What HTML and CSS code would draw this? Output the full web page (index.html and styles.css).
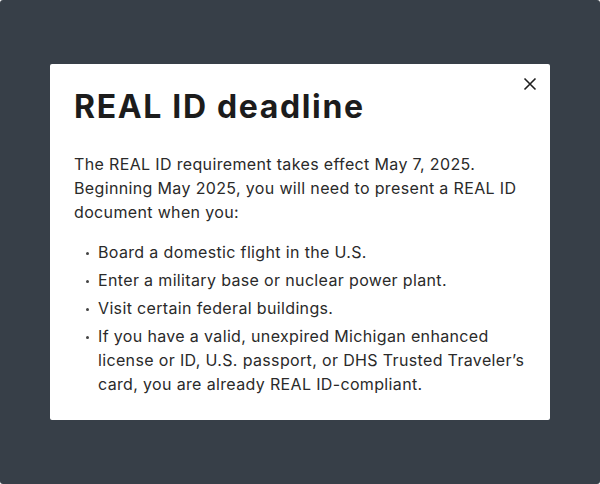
FILE: index.html
```html
<!DOCTYPE html>
<html>
<head>
<meta charset="utf-8">
<link rel="stylesheet" href="styles.css">
</head>
<body>
<div class="backdrop">
  <div class="modal">
    <button class="close" aria-label="Close">
      <svg width="14" height="14" viewBox="0 0 14 14"><path d="M1.5 1.5 L12.5 12.5 M12.5 1.5 L1.5 12.5" stroke="#1f1f1f" stroke-width="1.6" fill="none"/></svg>
    </button>
    <h1 class="title">REAL ID deadline</h1>
    <p class="intro">The REAL ID requirement takes effect May 7, 2025. Beginning May 2025, you will need to present a REAL ID document when you:</p>
    <ul class="list">
      <li>Board a domestic flight in the U.S.</li>
      <li>Enter a military base or nuclear power plant.</li>
      <li>Visit certain federal buildings.</li>
      <li>If you have a valid, unexpired Michigan enhanced license or ID, U.S. passport, or DHS Trusted Traveler’s card, you are already REAL ID-compliant.</li>
    </ul>
  </div>
</div>
</body>
</html>
```

FILE: styles.css
```css
html, body {
  margin: 0;
  padding: 0;
  background: #ffffff;
}
.backdrop {
  width: 600px;
  height: 484px;
  background: #373f48;
  border-radius: 3px;
  display: flex;
  justify-content: center;
  align-items: flex-start;
  padding-top: 64px;
  box-sizing: border-box;
  font-family: "Inter", "Liberation Sans", sans-serif;
}
.modal {
  position: relative;
  width: 500px;
  background: #ffffff;
  border-radius: 2px;
  padding: 23px 24px 24px 24px;
  box-sizing: border-box;
}
.close {
  position: absolute;
  top: 13px;
  right: 13px;
  width: 14px;
  height: 14px;
  padding: 0;
  border: 0;
  background: none;
  display: flex;
}
.title {
  margin: 0;
  font-size: 32px;
  line-height: 40px;
  font-weight: 700;
  color: #1c1c1c;
  letter-spacing: 1.65px;
}
.intro {
  margin: 25px 0 0 0;
  font-size: 16px;
  line-height: 24px;
  color: #2a2a2a;
  letter-spacing: 0.35px;
}
.list {
  list-style: none;
  margin: 16px 0 0 0;
  padding: 0 0 0 24px;
  font-size: 16px;
  line-height: 24px;
  color: #2a2a2a;
  letter-spacing: 0.35px;
}
.list li {
  position: relative;
  margin-bottom: 4px;
}
.list li:last-child {
  margin-bottom: 0;
}
.list li::before {
  content: "";
  position: absolute;
  left: -12px;
  top: 12px;
  width: 3px;
  height: 3px;
  border-radius: 50%;
  background: #444;
}
```
